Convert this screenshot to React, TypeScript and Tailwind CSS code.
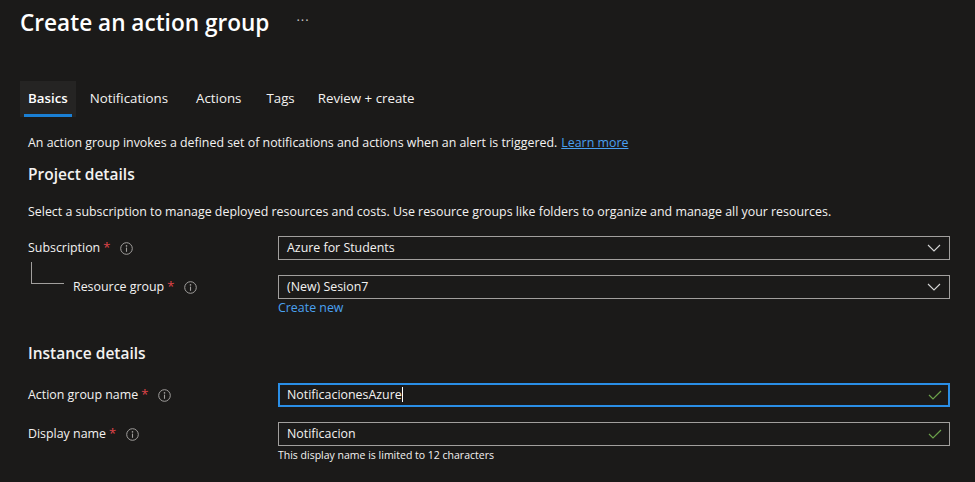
import React from "react";

const font = { fontFamily: '"Open Sans", "Noto Sans", Arial, sans-serif' };

function Info() {
  return (
    <svg width="13" height="13" viewBox="0 0 13 13" className="shrink-0">
      <circle cx="6.5" cy="6.5" r="5.8" fill="none" stroke="#a19f9d" strokeWidth="1" />
      <circle cx="6.5" cy="3.9" r="0.8" fill="#a19f9d" />
      <line x1="6.5" y1="5.6" x2="6.5" y2="9.8" stroke="#a19f9d" strokeWidth="1.1" />
    </svg>
  );
}

function Chevron() {
  return (
    <svg width="14" height="8" viewBox="0 0 14 8" className="shrink-0">
      <polyline points="1,1 7,7 13,1" fill="none" stroke="#d6d6d6" strokeWidth="1.1" />
    </svg>
  );
}

function Check() {
  return (
    <svg width="14" height="10" viewBox="0 0 14 10" className="shrink-0">
      <polyline points="1,5 5,9 13,1" fill="none" stroke="#6ba14a" strokeWidth="1.2" />
    </svg>
  );
}

function Label({ text, indent }: { text: string; indent?: boolean }) {
  return (
    <div className={`flex items-center w-[250px] shrink-0 ${indent ? "pl-[45px]" : ""}`}>
      <span className="text-[12.4px] text-[#f3f2f1]">{text}</span>
      <span className="text-[13px] text-[#e0454a] ml-[3px]">*</span>
      <span className="ml-[10px] flex"><Info /></span>
    </div>
  );
}

function Select({ value }: { value: string }) {
  return (
    <div className="w-[672px] h-[24px] border border-[#a19f9d] flex items-center justify-between pl-[8px] pr-[8px]">
      <span className="text-[12.4px] text-[#f3f2f1]">{value}</span>
      <Chevron />
    </div>
  );
}

export default function App() {
  return (
    <div className="w-[975px] h-[482px] bg-[#1b1a19] text-[#f3f2f1] overflow-hidden" style={font}>
      <div className="flex items-center pl-[20px] pt-[6px] h-[40px]">
        <h1 className="text-[22.6px] font-semibold text-white leading-[32px]">Create an action group</h1>
        <span className="ml-[27px] text-[13px] text-[#c8c6c4] tracking-[1px] -mt-[4px]">···</span>
      </div>

      <div className="flex items-stretch pl-[20px] mt-[41px] h-[36px]">
        <div className="relative bg-[#252423] px-[8px] flex items-center">
          <span className="text-[13.3px] font-semibold text-white">Basics</span>
          <div className="absolute left-[4px] right-[4px] bottom-0 h-[3px] bg-[#1a7fd4]" />
        </div>
        <div className="flex items-center pl-[14px] pr-[14px] text-[13.3px] text-[#f3f2f1]">Notifications</div>
        <div className="flex items-center px-[14px] text-[13.3px] text-[#f3f2f1]">Actions</div>
        <div className="flex items-center pl-[11px] pr-[12px] text-[13.3px] text-[#f3f2f1]">Tags</div>
        <div className="flex items-center pl-[11px] text-[13.3px] text-[#f3f2f1]">Review + create</div>
      </div>

      <div className="pl-[28px]">
        <div className="mt-[17px] h-[18px] flex items-center text-[12.4px]">
          <span>An action group invokes a defined set of notifications and actions when an alert is triggered.</span>
          <span className="ml-[4px] text-[#4aa0f0] underline">Learn more</span>
        </div>
        <div className="mt-[13px] h-[20px] flex items-center text-[15.5px] font-semibold">Project details</div>
        <div className="mt-[18px] h-[18px] flex items-center text-[12.4px]">
          Select a subscription to manage deployed resources and costs. Use resource groups like folders to organize and manage all your resources.
        </div>

        <div className="mt-[15px] flex items-center h-[24px]">
          <Label text="Subscription" />
          <Select value="Azure for Students" />
        </div>
        <div className="relative mt-[15px] flex items-center h-[24px]">
          <div className="absolute left-[3px] top-[-13px] w-[33px] h-[22px] border-l border-b border-[#a19f9d]" />
          <Label text="Resource group" indent />
          <Select value="(New) Sesion7" />
        </div>
        <div className="ml-[250px] h-[18px] flex items-center text-[12.4px] text-[#4aa0f0]">Create new</div>

        <div className="mt-[27px] h-[20px] flex items-center text-[15.5px] font-semibold">Instance details</div>

        <div className="mt-[19px] flex items-center h-[24px]">
          <Label text="Action group name" />
          <div className="w-[672px] h-[24px] border-2 border-[#2a8ee6] flex items-center justify-between pl-[7px] pr-[6px]">
            <span className="text-[12.4px] text-[#f3f2f1] flex items-center">
              NotificacionesAzure<span className="inline-block w-[1px] h-[15px] bg-white" />
            </span>
            <Check />
          </div>
        </div>
        <div className="mt-[15px] flex items-center h-[24px]">
          <Label text="Display name" />
          <div className="w-[672px] h-[24px] border border-[#a19f9d] flex items-center justify-between pl-[8px] pr-[7px]">
            <span className="text-[12.4px] text-[#f3f2f1]">Notificacion</span>
            <Check />
          </div>
        </div>
        <div className="ml-[250px] mt-[2px] h-[16px] flex items-center text-[10.5px] text-[#f3f2f1]">
          This display name is limited to 12 characters
        </div>
      </div>
    </div>
  );
}
